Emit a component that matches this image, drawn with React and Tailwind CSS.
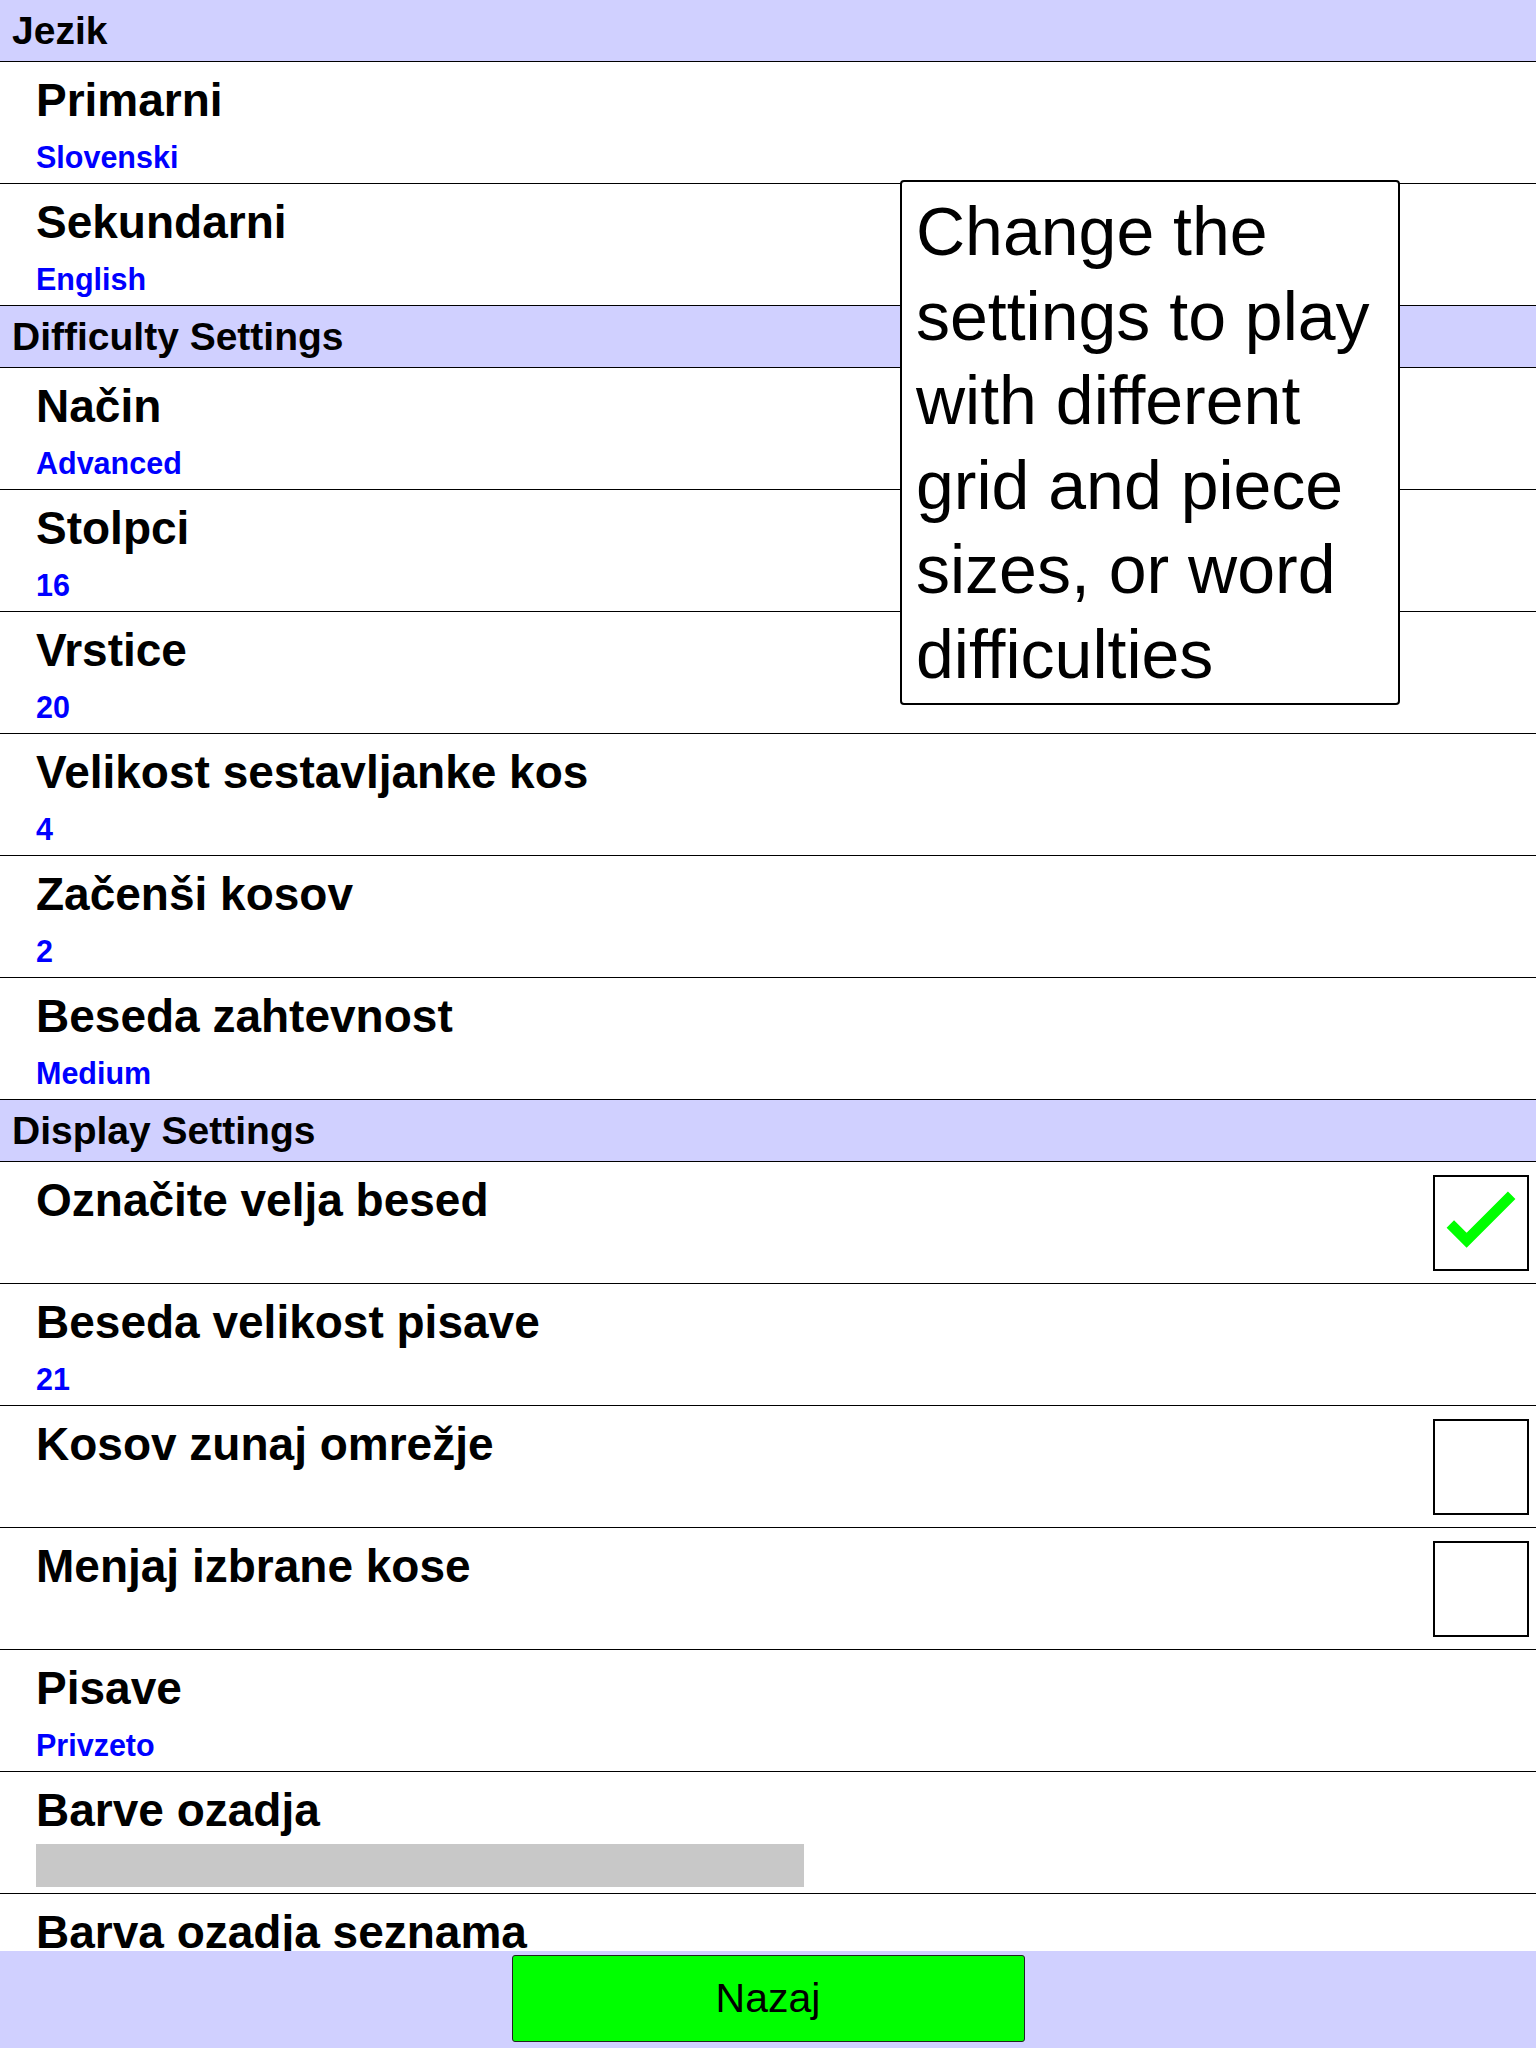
const sections = [
  {
    title: 'Jezik',
    rows: [
      { label: 'Primarni', value: 'Slovenski' },
      { label: 'Sekundarni', value: 'English' },
    ],
  },
  {
    title: 'Difficulty Settings',
    rows: [
      { label: 'Način', value: 'Advanced' },
      { label: 'Stolpci', value: '16' },
      { label: 'Vrstice', value: '20' },
      { label: 'Velikost sestavljanke kos', value: '4' },
      { label: 'Začenši kosov', value: '2' },
      { label: 'Beseda zahtevnost', value: 'Medium' },
    ],
  },
  {
    title: 'Display Settings',
    rows: [
      { label: 'Označite velja besed', check: true },
      { label: 'Beseda velikost pisave', value: '21' },
      { label: 'Kosov zunaj omrežje', check: false },
      { label: 'Menjaj izbrane kose', check: false },
      { label: 'Pisave', value: 'Privzeto' },
      { label: 'Barve ozadja', swatch: 'bg-[#c8c8c8]' },
      { label: 'Barva ozadja seznama', swatch: 'bg-[#c8c8c8]' },
    ],
  },
]

const hint = [
  'Change the',
  'settings to play',
  'with different',
  'grid and piece',
  'sizes, or word',
  'difficulties',
]

function Checkbox({ checked }) {
  return (
    <div className="mr-[7px] mt-[1px] h-[96px] w-[96px] shrink-0 border-2 border-black bg-white">
      {checked && (
        <svg viewBox="0 0 96 96" className="h-full w-full">
          <polyline
            points="16,49 33,66 80,19"
            fill="none"
            stroke="#00ff00"
            strokeWidth="11"
            strokeLinejoin="miter"
            strokeLinecap="butt"
          />
        </svg>
      )}
    </div>
  )
}

function SettingRow({ row }) {
  return (
    <div className="flex h-[122px] shrink-0 items-start border-b border-black bg-white pt-[12px]">
      <div className="min-w-0 flex-1 pl-[36px]">
        <div className="whitespace-nowrap text-[46px] font-bold leading-[52px] text-black">
          {row.label}
        </div>
        {row.value && (
          <div className="mt-[14px] text-[30.5px] font-bold leading-[34px] text-[#0000ff]">
            {row.value}
          </div>
        )}
        {row.swatch && <div className={`mt-[8px] h-[43px] w-[768px] ${row.swatch}`} />}
      </div>
      {row.check !== undefined && <Checkbox checked={row.check} />}
    </div>
  )
}

function SectionHeader({ title }) {
  return (
    <div className="h-[62px] shrink-0 border-b border-black bg-[#d0d0ff] pl-[12px] pt-[8px] text-[39px] font-bold leading-[45px] text-black">
      {title}
    </div>
  )
}

export default function App() {
  return (
    <div className="relative flex h-[2048px] w-[1536px] flex-col overflow-hidden bg-white font-[family-name:'Liberation_Sans',Arial,sans-serif]">
      <div className="flex h-[1951px] shrink-0 flex-col overflow-hidden">
        {sections.map((section) => (
          <div key={section.title} className="flex flex-col">
            <SectionHeader title={section.title} />
            {section.rows.map((row) => (
              <SettingRow key={row.label} row={row} />
            ))}
          </div>
        ))}
      </div>

      <div className="flex flex-1 justify-center bg-[#d0d0ff] pt-[4px]">
        <button className="flex h-[87px] w-[513px] items-center justify-center rounded-[3px] border border-[#222] bg-[#00ff00] text-[41px] leading-none text-black">
          Nazaj
        </button>
      </div>

      {/* tooltip lies over the list */}
      <div className="absolute left-[900px] top-[180px] h-[525px] w-[500px] rounded-[4px] border-2 border-black bg-white pl-[14px] pt-[7px] text-[68px] leading-[84.5px] text-black">
        {hint.map((line) => (
          <div key={line} className="whitespace-nowrap">
            {line}
          </div>
        ))}
      </div>
    </div>
  )
}
